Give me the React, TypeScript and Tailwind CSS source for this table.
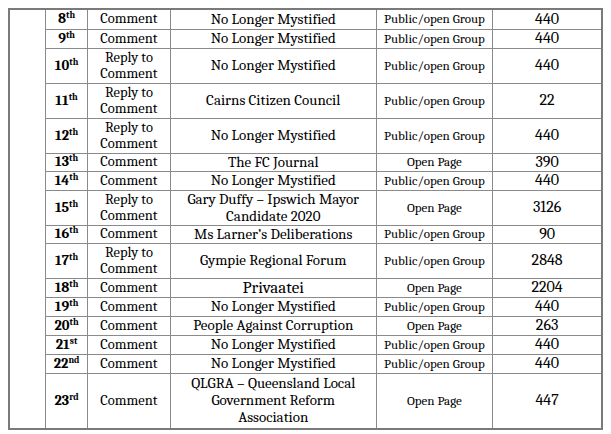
type Row = {
  n: string;
  suf: string;
  type: string[];
  name: string[];
  nameBig?: boolean;
  kind: string;
  count: string;
  h: string;
};

const rows: Row[] = [
  { n: "8", suf: "th", type: ["Comment"], name: ["No Longer Mystified"], kind: "Public/open Group", count: "440", h: "h-[20px]" },
  { n: "9", suf: "th", type: ["Comment"], name: ["No Longer Mystified"], kind: "Public/open Group", count: "440", h: "h-[19px]" },
  { n: "10", suf: "th", type: ["Reply to", "Comment"], name: ["No Longer Mystified"], kind: "Public/open Group", count: "440", h: "h-[35px]" },
  { n: "11", suf: "th", type: ["Reply to", "Comment"], name: ["Cairns Citizen Council"], kind: "Public/open Group", count: "22", h: "h-[35px]" },
  { n: "12", suf: "th", type: ["Reply to", "Comment"], name: ["No Longer Mystified"], kind: "Public/open Group", count: "440", h: "h-[35px]" },
  { n: "13", suf: "th", type: ["Comment"], name: ["The FC Journal"], kind: "Open Page", count: "390", h: "h-[18px]" },
  { n: "14", suf: "th", type: ["Comment"], name: ["No Longer Mystified"], kind: "Public/open Group", count: "440", h: "h-[19px]" },
  { n: "15", suf: "th", type: ["Reply to", "Comment"], name: ["Gary Duffy \u2013 Ipswich Mayor", "Candidate 2020"], kind: "Open Page", count: "3126", h: "h-[34px]" },
  { n: "16", suf: "th", type: ["Comment"], name: ["Ms Larner\u2019s Deliberations"], kind: "Public/open Group", count: "90", h: "h-[18px]" },
  { n: "17", suf: "th", type: ["Reply to", "Comment"], name: ["Gympie Regional Forum"], kind: "Public/open Group", count: "2848", h: "h-[35px]" },
  { n: "18", suf: "th", type: ["Comment"], name: ["Privaatei"], nameBig: true, kind: "Open Page", count: "2204", h: "h-[19px]" },
  { n: "19", suf: "th", type: ["Comment"], name: ["No Longer Mystified"], kind: "Public/open Group", count: "440", h: "h-[19px]" },
  { n: "20", suf: "th", type: ["Comment"], name: ["People Against Corruption"], kind: "Open Page", count: "263", h: "h-[19px]" },
  { n: "21", suf: "st", type: ["Comment"], name: ["No Longer Mystified"], kind: "Public/open Group", count: "440", h: "h-[19px]" },
  { n: "22", suf: "nd", type: ["Comment"], name: ["No Longer Mystified"], kind: "Public/open Group", count: "440", h: "h-[19px]" },
  { n: "23", suf: "rd", type: ["Comment"], name: ["QLGRA \u2013 Queensland Local", "Government Reform", "Association"], kind: "Open Page", count: "447", h: "h-[56px]" },
];

// serif stack — the named Liberation Serif class did not take in the sandbox
const cell = "font-serif border border-[#8a8a8a] p-0 text-center align-middle";

export default function App() {
  return (
    <div className="min-h-[434px] bg-white p-2 text-black font-serif">
      <table className="table-fixed border-collapse border-2 border-[#7a7a7a] font-serif">
        <colgroup>
          <col className="w-[37px]" />
          <col className="w-[42px]" />
          <col className="w-[83px]" />
          <col className="w-[207px]" />
          <col className="w-[117px]" />
          <col className="w-[110px]" />
        </colgroup>
        <tbody>
          {rows.map((r, i) => (
            <tr key={r.n} className={r.h}>
              {i === 0 && <td rowSpan={rows.length} className={cell} />}
              <td className={`${cell} text-[14.5px] font-bold leading-[16px]`}>
                {r.n}
                <sup className="relative -top-[5px] align-baseline text-[9.5px] font-bold">{r.suf}</sup>
              </td>
              <td className={`${cell} text-[14.5px] leading-[16px]`}>
                {r.type.map((t) => (
                  <div key={t}>{t}</div>
                ))}
              </td>
              <td className={`${cell} ${r.nameBig ? "text-[17px] leading-[18px]" : "text-[15px] leading-[17px]"}`}>
                {r.name.map((t) => (
                  <div key={t}>{t}</div>
                ))}
              </td>
              <td className={`${cell} text-[13px] leading-[16px]`}>{r.kind}</td>
              <td className={`${cell} text-[16px] leading-[17px]`}>{r.count}</td>
            </tr>
          ))}
        </tbody>
      </table>
    </div>
  );
}
